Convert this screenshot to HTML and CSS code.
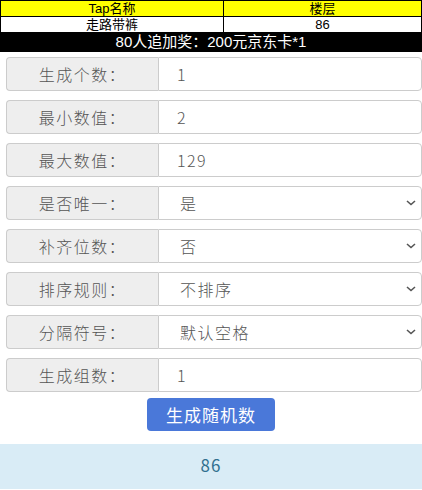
FILE: index.html
```html
<!DOCTYPE html>
<html lang="zh-CN">
<head>
    <meta charset="UTF-8">
    <meta name="viewport" content="width=device-width, initial-scale=1.0">
    <title>随机数生成器</title>
    <link rel="stylesheet" href="styles.css">
</head>
<body>
    <table class="rank">
        <tr class="rank-head">
            <td>Tap名称</td>
            <td>楼层</td>
        </tr>
        <tr>
            <td>走路带裤</td>
            <td>86</td>
        </tr>
        <tr class="rank-bonus">
            <td colspan="2">80人追加奖：200元京东卡*1</td>
        </tr>
    </table>

    <div class="form">
        <div class="input-group">
            <span class="addon">生成个数：</span>
            <input class="field" type="number" id="count" value="1">
        </div>
        <div class="input-group">
            <span class="addon">最小数值：</span>
            <input class="field" type="number" id="min" value="2">
        </div>
        <div class="input-group">
            <span class="addon">最大数值：</span>
            <input class="field" type="number" id="max" value="129">
        </div>
        <div class="input-group">
            <span class="addon">是否唯一：</span>
            <div class="select-wrap">
                <select class="field" id="unique">
                    <option>是</option>
                    <option>否</option>
                </select>
                <svg class="caret" width="10" height="6" viewBox="0 0 10 6"><path d="M1 1l4 3.5L9 1" fill="none" stroke="#555" stroke-width="1.6"/></svg>
            </div>
        </div>
        <div class="input-group">
            <span class="addon">补齐位数：</span>
            <div class="select-wrap">
                <select class="field" id="pad">
                    <option>否</option>
                    <option>是</option>
                </select>
                <svg class="caret" width="10" height="6" viewBox="0 0 10 6"><path d="M1 1l4 3.5L9 1" fill="none" stroke="#555" stroke-width="1.6"/></svg>
            </div>
        </div>
        <div class="input-group">
            <span class="addon">排序规则：</span>
            <div class="select-wrap">
                <select class="field" id="sort">
                    <option>不排序</option>
                    <option>从小到大</option>
                    <option>从大到小</option>
                </select>
                <svg class="caret" width="10" height="6" viewBox="0 0 10 6"><path d="M1 1l4 3.5L9 1" fill="none" stroke="#555" stroke-width="1.6"/></svg>
            </div>
        </div>
        <div class="input-group">
            <span class="addon">分隔符号：</span>
            <div class="select-wrap">
                <select class="field" id="sep">
                    <option>默认空格</option>
                    <option>逗号</option>
                    <option>换行</option>
                </select>
                <svg class="caret" width="10" height="6" viewBox="0 0 10 6"><path d="M1 1l4 3.5L9 1" fill="none" stroke="#555" stroke-width="1.6"/></svg>
            </div>
        </div>
        <div class="input-group">
            <span class="addon">生成组数：</span>
            <input class="field" type="number" id="groups" value="1">
        </div>
        <div class="actions">
            <button class="btn" onclick="generate()">生成随机数</button>
        </div>
    </div>

    <div class="result" id="result">86</div>

    <script>
        function generate() {
            const count = parseInt(document.getElementById('count').value);
            const min = parseInt(document.getElementById('min').value);
            const max = parseInt(document.getElementById('max').value);
            const groups = parseInt(document.getElementById('groups').value);
            const unique = document.getElementById('unique').selectedIndex === 0;
            const pad = document.getElementById('pad').selectedIndex === 1;
            const sort = document.getElementById('sort').selectedIndex;
            const sep = ['\u0020', ',', '\n'][document.getElementById('sep').selectedIndex];

            if (isNaN(count) || isNaN(min) || isNaN(max) || isNaN(groups) || min > max) {
                alert('请输入正确的数值');
                return;
            }

            const width = String(max).length;
            const lines = [];
            for (let g = 0; g < groups; g++) {
                let nums = [];
                while (nums.length < count) {
                    const n = Math.floor(Math.random() * (max - min + 1)) + min;
                    if (unique && nums.includes(n) && nums.length < max - min + 1) continue;
                    nums.push(n);
                }
                if (sort === 1) nums.sort((a, b) => a - b);
                if (sort === 2) nums.sort((a, b) => b - a);
                lines.push(nums.map(n => pad ? String(n).padStart(width, '0') : n).join(sep));
            }

            document.getElementById('result').textContent = lines.join('\n');
        }
    </script>
</body>
</html>
```

FILE: styles.css
```css
body {
    margin: 0;
    font-family: "Noto Sans CJK SC", "Liberation Sans", sans-serif;
    font-weight: 300;
    color: #555;
    background: #fff;
}
.rank {
    width: 100%;
    border-collapse: collapse;
    font-family: "Liberation Sans", "Noto Sans CJK SC", sans-serif;
    font-weight: 400;
    font-size: 13px;
    color: #000;
}
.rank td {
    border: 1px solid #000;
    padding: 0;
    height: 15px;
    line-height: 15px;
    text-align: center;
    width: 53%;
}
.rank td + td {
    width: 47%;
}
.rank-head td {
    background: #ffff00;
}
.rank-bonus td {
    background: #000;
    color: #fff;
    height: 18px;
    line-height: 18px;
    font-size: 15px;
}
.form {
    margin: 5px 0 0 6px;
}
.input-group {
    display: flex;
    height: 34px;
    margin-bottom: 9px;
}
.addon {
    box-sizing: border-box;
    width: 152px;
    flex: none;
    display: flex;
    align-items: center;
    justify-content: center;
    background: #eee;
    border: 1px solid #ccc;
    border-right: none;
    border-radius: 4px 0 0 4px;
    font-size: 16px;
    letter-spacing: 1.5px;
    color: #555;
}
.field {
    box-sizing: border-box;
    flex: 1;
    width: 100%;
    height: 34px;
    margin: 0;
    padding: 0 0 0 18px;
    border: 1px solid #ccc;
    border-radius: 0 4px 4px 0;
    background: #fff;
    font-family: "Noto Sans CJK SC", "Liberation Sans", sans-serif;
    font-weight: 300;
    font-size: 16px;
    letter-spacing: 1.5px;
    color: #555;
    outline: none;
    appearance: none;
    -moz-appearance: textfield;
}
.field::-webkit-inner-spin-button,
.field::-webkit-outer-spin-button {
    -webkit-appearance: none;
    margin: 0;
}
.select-wrap {
    position: relative;
    flex: 1;
    display: flex;
}
.select-wrap .field {
    padding-left: 21px;
}
.caret {
    position: absolute;
    right: 6px;
    top: 14px;
    pointer-events: none;
}
.actions {
    display: flex;
    justify-content: center;
    padding-right: 6px;
    margin-top: -3px;
}
.btn {
    width: 128px;
    height: 33px;
    background-color: #4a78d9;
    color: #fff;
    border: none;
    border-radius: 4px;
    font-family: "Noto Sans CJK SC", sans-serif;
    font-weight: 400;
    font-size: 17px;
    letter-spacing: 1px;
    cursor: pointer;
}
.result {
    margin-top: 13px;
    height: 45px;
    line-height: 42px;
    background: #d9ecf6;
    color: #31708f;
    text-align: center;
    font-size: 17px;
    font-weight: 400;
    letter-spacing: 1px;
    white-space: pre;
}
```
